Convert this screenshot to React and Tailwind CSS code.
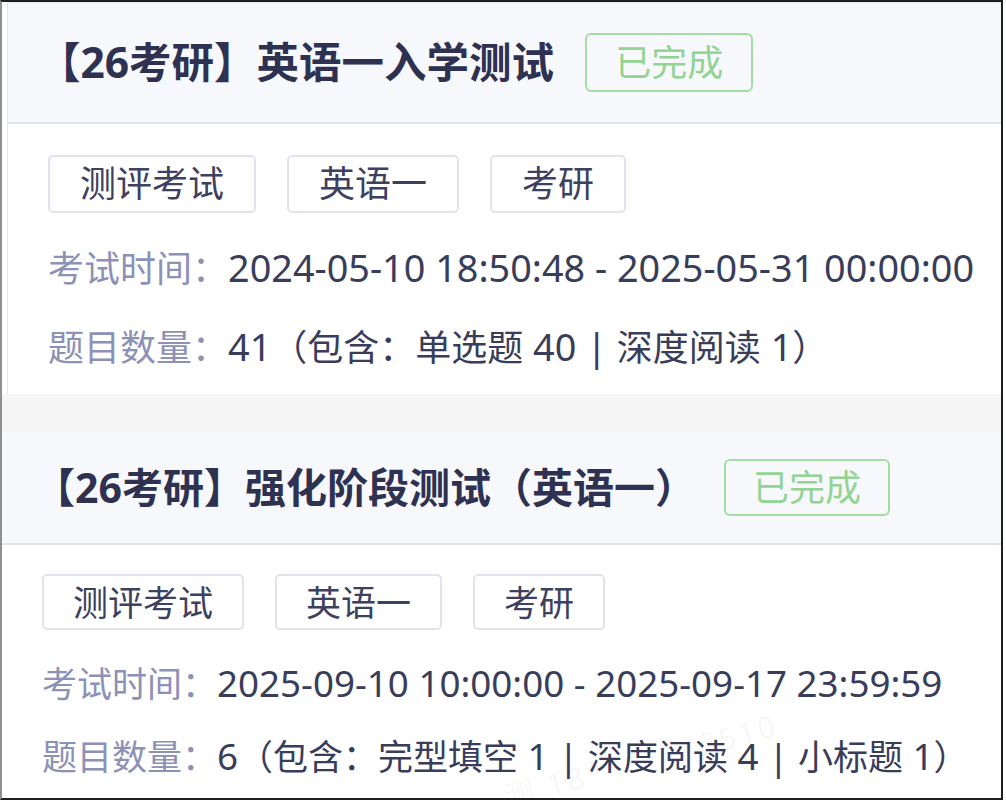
const FONT = { fontFamily: "'Noto Sans', 'Noto Sans CJK SC', sans-serif" };

// latin runs render a little larger than the CJK text, like in the original font
const Mixed = ({ text, latin }) =>
  text.split(/([\x20-\x7E]+)/).map((part, i) =>
    /^[\x20-\x7E]+$/.test(part) ? (
      <span key={i} className={latin}>
        {part}
      </span>
    ) : (
      part
    )
  );

const exams = [
  {
    title: "【26考研】英语一入学测试",
    tags: ["测评考试", "英语一", "考研"],
    time: "2024-05-10 18:50:48 - 2025-05-31 00:00:00",
    count: "41（包含：单选题 40 | 深度阅读 1）",
  },
  {
    title: "【26考研】强化阶段测试（英语一）",
    tags: ["测评考试", "英语一", "考研"],
    time: "2025-09-10 10:00:00 - 2025-09-17 23:59:59",
    count: "6（包含：完型填空 1 | 深度阅读 4 | 小标题 1）",
  },
];

const Badge = ({ className }) => (
  <span
    className={
      "inline-flex items-center rounded-[6px] border-2 border-[#a3dca4] text-[36px] leading-none text-[#93d494] " +
      className
    }
  >
    已完成
  </span>
);

const App = () => {
  const [first, second] = exams;

  return (
    <div className="relative h-[800px] w-[1006px] bg-white" style={FONT}>
      <div className="flex h-[800px] w-[1003px] flex-col overflow-hidden border-2 border-[#1f1f1f] border-l-[#8f8f8f] bg-[#f5f5f6]">
        {/* first card */}
        <div className="bg-white pl-[5px]">
          <div className="border-l border-t border-[#e4e6ee]">
            <div className="flex h-[121px] items-center border-b-2 border-[#e1e4f0] bg-[#f7f8fc] pl-[40px]">
              <h2 className="-ml-[10px] text-[42.5px] font-bold leading-none text-[#2e3150]">
                {first.title}
              </h2>
              <Badge className="ml-[31px] h-[59px] px-[28px]" />
            </div>
            <div className="bg-white pb-[7px] pl-[40px] pt-[31px]">
              <div className="flex gap-[31px]">
                {first.tags.map((tag) => (
                  <span
                    key={tag}
                    className="inline-flex h-[58px] items-center rounded-[5px] border-2 border-[#e2e4eb] px-[30px] text-[36px] leading-none text-[#3d405e]"
                  >
                    {tag}
                  </span>
                ))}
              </div>
              <div className="mt-[16px] whitespace-nowrap text-[36px] leading-[78px]">
                <span className="text-[#8d91b6]">考试时间：</span>
                <span className="text-[#3a3d5a]">
                  <Mixed text={first.time} latin="text-[1.05em]" />
                </span>
              </div>
              <div className="whitespace-nowrap text-[36px] leading-[78px]">
                <span className="text-[#8d91b6]">题目数量：</span>
                <span className="text-[#3a3d5a]">
                  <Mixed text={first.count} latin="text-[1.05em]" />
                </span>
              </div>
            </div>
          </div>
        </div>

        <div className="h-[38px] shrink-0" />

        {/* second card */}
        <div className="flex-1 bg-white">
          <div className="flex h-[113px] items-center border-b-2 border-[#e1e4f0] bg-[#f7f8fc] pl-[40px]">
            <h2 className="-ml-[8px] text-[41px] font-bold leading-none text-[#2e3150]">
              {second.title}
            </h2>
            <Badge className="ml-[28px] h-[57px] px-[27px]" />
          </div>
          <div className="pb-[7px] pl-[40px] pt-[29px]">
            <div className="flex gap-[31px]">
              {second.tags.map((tag) => (
                <span
                  key={tag}
                  className="inline-flex h-[56px] items-center rounded-[5px] border-2 border-[#e2e4eb] px-[29px] text-[35px] leading-none text-[#3d405e]"
                >
                  {tag}
                </span>
              ))}
            </div>
            <div className="mt-[17px] whitespace-nowrap text-[35px] leading-[73px]">
              <span className="text-[#8d91b6]">考试时间：</span>
              <span className="text-[#3a3d5a]">
                <Mixed text={second.time} latin="text-[1.05em]" />
              </span>
            </div>
            <div className="whitespace-nowrap text-[35px] leading-[73px]">
              <span className="text-[#8d91b6]">题目数量：</span>
              <span className="text-[#3a3d5a]">
                <Mixed text={second.count} latin="text-[1.05em]" />
              </span>
            </div>
          </div>
        </div>
      </div>

      {/* faint watermark, sits behind nothing but barely visible */}
      <span className="pointer-events-none absolute left-[500px] top-[738px] -rotate-[15deg] whitespace-nowrap text-[30px] tracking-[3px] text-[#000000]/[0.05]">
        测 18******2510
      </span>
    </div>
  );
};

export default App;
